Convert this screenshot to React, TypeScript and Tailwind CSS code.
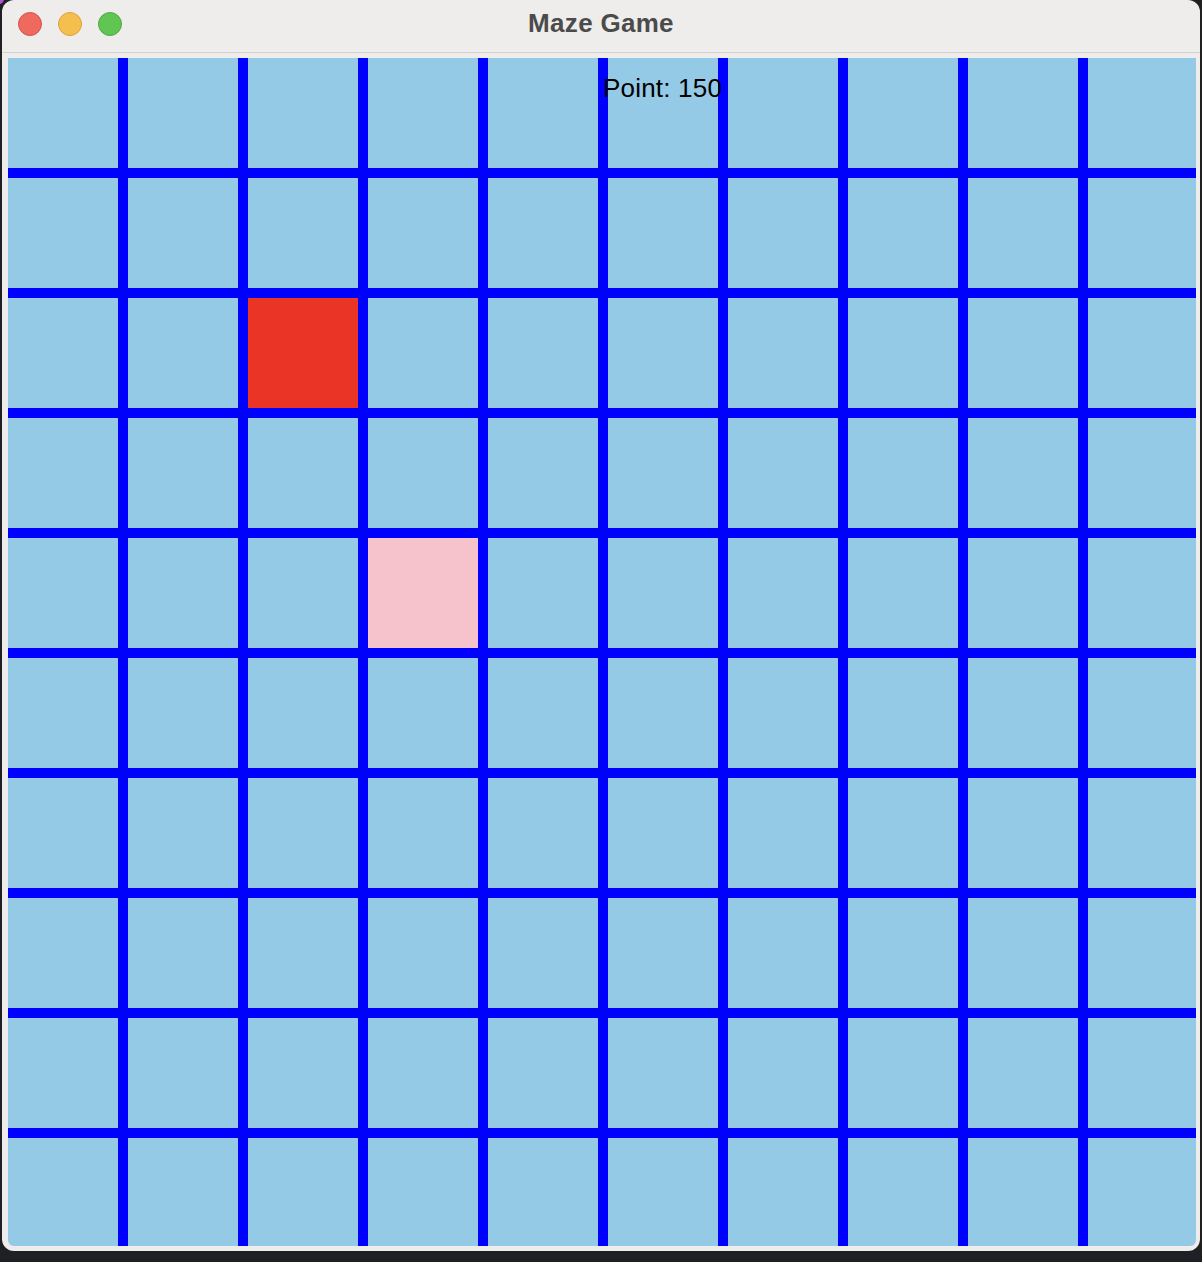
import React from "react";

const ROWS = 10;
const COLS = 10;

// special cells, keyed "row-col"
const CELL_COLORS: Record<string, string> = {
  "2-2": "bg-[#e93426]",
  "4-3": "bg-[#f6c3cc]",
};

function TrafficLights() {
  return (
    <div className="absolute left-[16px] top-[12px] flex gap-[16px]">
      <span className="block w-[24px] h-[24px] rounded-full bg-[#ee6a5f] border border-[#d5544a]" />
      <span className="block w-[24px] h-[24px] rounded-full bg-[#f5bf4f] border border-[#d9a33a]" />
      <span className="block w-[24px] h-[24px] rounded-full bg-[#61c554] border border-[#4ea942]" />
    </div>
  );
}

export default function App() {
  const cells = [];
  for (let r = 0; r < ROWS; r++) {
    for (let c = 0; c < COLS; c++) {
      const color = CELL_COLORS[`${r}-${c}`] ?? "bg-[#95cae6]";
      cells.push(
        <div
          key={`${r}-${c}`}
          className={`box-border w-[120px] h-[120px] border-[5px] border-[#0000ff] ${color}`}
        />
      );
    }
  }

  return (
    <div className="w-[1202px] h-[1262px] bg-[#1f2024] overflow-hidden relative">
      <span className="absolute -left-[6px] -top-[6px] w-[10px] h-[10px] rounded-full bg-[#b44fd0]" />
      <div className="ml-[2px] w-[1198px] h-[1251px] bg-[#eeedeb] rounded-[12px] overflow-hidden flex flex-col">
        <div className="relative h-[52px] shrink-0 flex items-start justify-center pt-[10px]">
          <TrafficLights />
          <span
            className="text-[26px] font-bold text-[#4b4b4b] leading-none tracking-[0.3px]"
            style={{ fontFamily: '"Liberation Sans", Arial, sans-serif' }}
          >
            Maze Game
          </span>
        </div>
        <div className="h-px shrink-0 bg-[#d3d2d0]" />
        <div className="pt-[5px] pl-[6px]">
          <div className="relative w-[1188px] h-[1188px] overflow-hidden rounded-b-[6px]">
            <div className="-ml-[5px] -mt-[5px] grid grid-cols-[repeat(10,120px)] w-[1200px]">
              {cells}
            </div>
            <span
              className="absolute left-[595px] top-[17px] text-[26px] leading-none text-black tracking-[0.2px]"
              style={{ fontFamily: '"Liberation Sans", Arial, sans-serif' }}
            >
              Point: 150
            </span>
          </div>
        </div>
      </div>
    </div>
  );
}
